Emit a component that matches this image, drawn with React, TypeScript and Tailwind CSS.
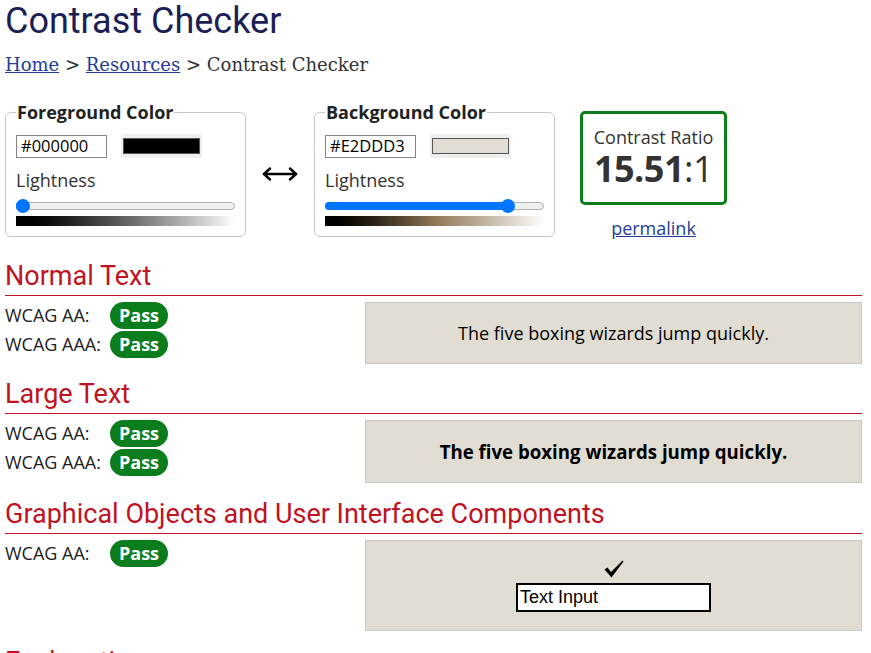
import React from "react";

const heading = "font-['Roboto',sans-serif] text-[27px] leading-[30px] text-[#c1121f] border-b border-[#c1121f] pb-[4px] m-0 font-normal";

function Pass() {
  return (
    <span className="inline-flex h-[27px] items-center rounded-full bg-[#0b7d1c] px-[9px] text-[18px] font-bold text-white">
      Pass
    </span>
  );
}

function Row({ label }: { label: string }) {
  return (
    <div className="flex h-[27px] items-center">
      <span className="w-[105px] text-[18px] text-[#222]">{label}</span>
      <Pass />
    </div>
  );
}

function ColorField({
  legend,
  hex,
  swatch,
  pos,
  gradient,
}: {
  legend: string;
  hex: string;
  swatch: string;
  pos: number;
  gradient: string;
}) {
  return (
    <fieldset className="w-[241px] rounded-[6px] border border-[#c8c8c8] px-[10px] pb-[10px]">
      <legend className="px-[1px] text-[18px] leading-[23px] font-bold text-[#222]">{legend}</legend>
      <div className="mt-[10px] flex items-center gap-[14px]">
        <div className="flex h-[23px] w-[91px] items-center border border-[#858585] px-[4px] text-[16.5px] text-black">
          {hex}
        </div>
        <div className="flex h-[24px] w-[81px] items-center justify-center bg-[#efefef]">
          <div className="h-[16px] w-[77px] border border-[#555]" style={{ background: swatch }} />
        </div>
      </div>
      <div className="mt-[10px] text-[18px] leading-[24px] text-[#333]">Lightness</div>
      <div className="relative mt-[7px] h-[14px] w-[219px]">
        <div className="absolute left-0 right-0 top-[3px] h-[8px] rounded-full border border-[#b2b2b2] bg-[#efefef]" />
        <div
          className="absolute left-0 top-[3px] h-[8px] rounded-full bg-[#0075ff]"
          style={{ width: `${pos + 7}px` }}
        />
        <div
          className="absolute top-0 h-[14px] w-[14px] rounded-full bg-[#0075ff]"
          style={{ left: `${pos}px` }}
        />
      </div>
      <div className={`mt-[3px] h-[10px] w-[219px] ${gradient}`} />
    </fieldset>
  );
}

export default function App() {
  return (
    <div className="h-[653px] w-full overflow-hidden bg-white pl-[5px] pr-[9px] font-['Open_Sans',sans-serif] text-[#222]">
      {/* Title */}
      <h1 className="m-0 font-['Roboto',sans-serif] text-[36px] font-normal leading-[42px] text-[#1b1f55]">
        Contrast Checker
      </h1>

      {/* Breadcrumb */}
      <div className="mt-[12px] font-['DejaVu_Serif',serif] text-[18px] leading-[21px] text-[#333]">
        <a href="#" className="text-[#233d99] underline">Home</a> &gt;{" "}
        <a href="#" className="text-[#233d99] underline">Resources</a> &gt; Contrast Checker
      </div>

      {/* Pickers */}
      <div className="mt-[26px] flex items-start">
        <ColorField
          legend="Foreground Color"
          hex="#000000"
          swatch="#000000"
          pos={0}
          gradient="bg-gradient-to-r from-black to-white"
        />
        <div className="flex w-[68px] self-stretch items-center justify-center pt-[6px]">
          <svg width="36" height="14" viewBox="0 0 36 14" fill="none" stroke="black" strokeWidth="2.4" strokeLinecap="round" strokeLinejoin="round">
            <line x1="2" y1="7" x2="34" y2="7" />
            <polyline points="8,1.5 2,7 8,12.5" />
            <polyline points="28,1.5 34,7 28,12.5" />
          </svg>
        </div>
        <ColorField
          legend="Background Color"
          hex="#E2DDD3"
          swatch="#E2DDD3"
          pos={176}
          gradient="bg-gradient-to-r from-black via-[#8f7755] to-white"
        />
        <div className="ml-[25px] mt-[10px] flex flex-col items-center">
          <div className="flex h-[94px] w-[147px] flex-col items-center justify-center rounded-[5px] border-[3px] border-[#0b7d1c] text-[#333]">
            <div className="text-[18px] leading-[20px]">Contrast Ratio</div>
            <div className="mt-[2px] text-[36px] leading-[40px] tracking-[-0.5px]">
              <span className="font-bold">15.51</span>:1
            </div>
          </div>
          <a href="#" className="mt-[11px] text-[18px] leading-[24px] text-[#233d99] underline">
            permalink
          </a>
        </div>
      </div>

      {/* Normal Text */}
      <h2 className={`${heading} mt-[21px]`}>Normal Text</h2>
      <div className="mt-[6px] flex items-start">
        <div className="flex w-[360px] flex-col gap-[2px]">
          <Row label="WCAG AA:" />
          <Row label="WCAG AAA:" />
        </div>
        <div className="flex h-[62px] flex-1 items-center justify-center border border-[#c8c8c8] bg-[#E2DDD3] text-[18px] text-black">
          The five boxing wizards jump quickly.
        </div>
      </div>

      {/* Large Text */}
      <h2 className={`${heading} mt-[15px]`}>Large Text</h2>
      <div className="mt-[6px] flex items-start">
        <div className="flex w-[360px] flex-col gap-[2px]">
          <Row label="WCAG AA:" />
          <Row label="WCAG AAA:" />
        </div>
        <div className="flex h-[63px] flex-1 items-center justify-center border border-[#c8c8c8] bg-[#E2DDD3] text-[18.66px] font-bold text-black">
          The five boxing wizards jump quickly.
        </div>
      </div>

      {/* Graphical Objects */}
      <h2 className={`${heading} mt-[16px]`}>Graphical Objects and User Interface Components</h2>
      <div className="mt-[6px] flex items-start">
        <div className="flex w-[360px] flex-col">
          <Row label="WCAG AA:" />
        </div>
        <div className="flex h-[91px] flex-1 flex-col items-center justify-center border border-[#c8c8c8] bg-[#E2DDD3]">
          <svg width="20" height="18" viewBox="0 0 20 18">
            <path d="M0.5 9.5 L3.5 7.5 L7 12 L18.5 0.5 L19.5 1.5 L7.5 17.5 Z" fill="black" />
          </svg>
          <div className="mt-[5px] flex h-[29px] w-[195px] items-center border-2 border-black bg-white px-[2px] font-['Liberation_Sans',Arial,sans-serif] text-[18px] text-black">
            Text Input
          </div>
        </div>
      </div>

      {/* Explanation */}
      <h2 className={`${heading} mt-[16px]`}>Explanation</h2>
    </div>
  );
}
